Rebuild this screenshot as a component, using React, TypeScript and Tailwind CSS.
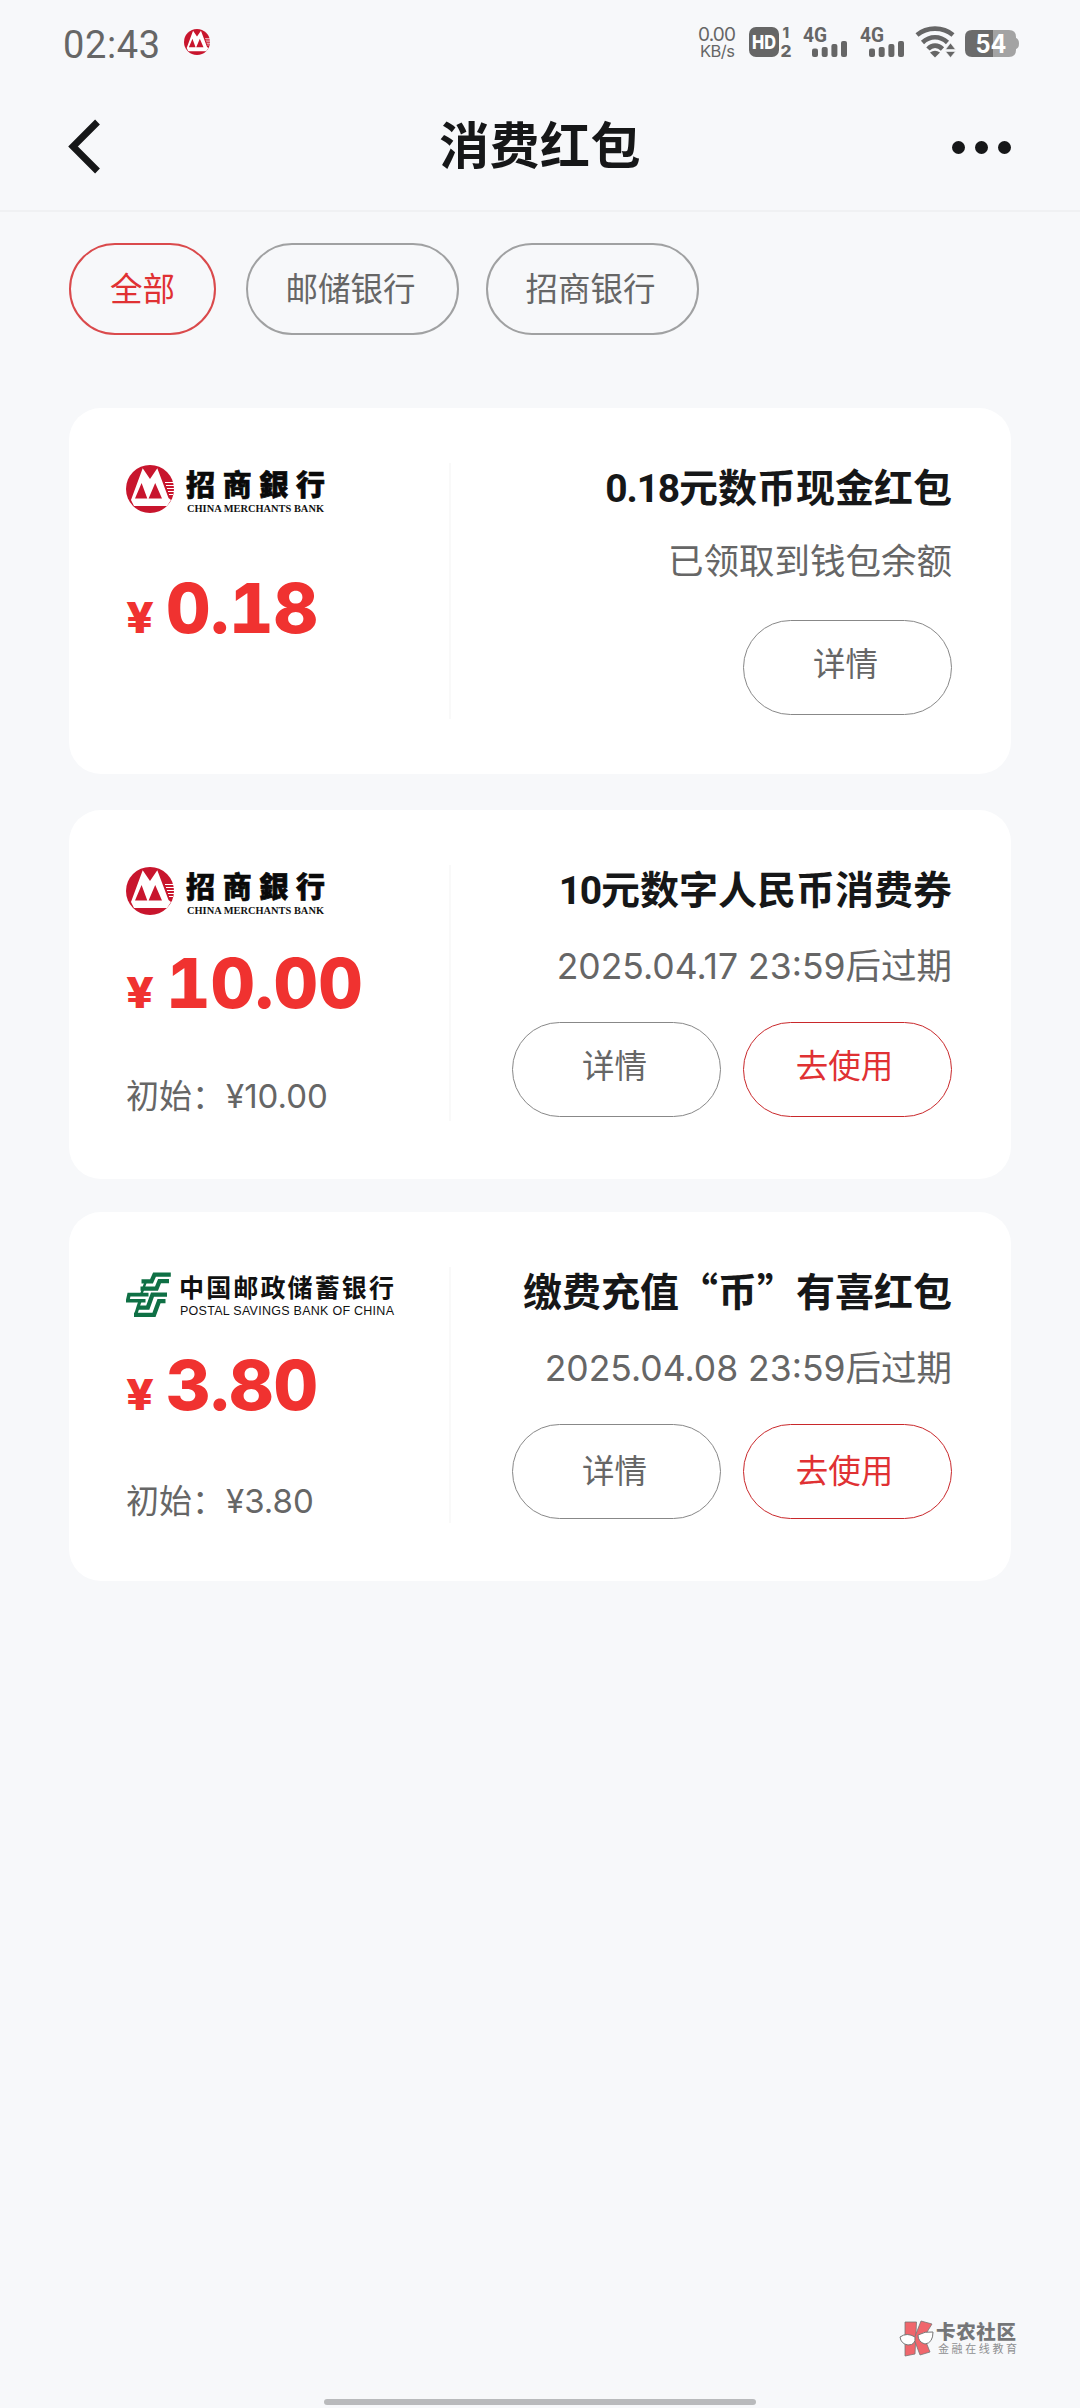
type Coupon = {
  bank: "cmb" | "psbc";
  amount: string;
  initial?: string;
  lead: string;
  title: string;
  note: string;
  card: string;
  amountGap: string;
  initialGap: string;
  noteGap: string;
  actionGap: string;
  labelShift: string;
};

const coupons: Coupon[] = [
  {
    bank: "cmb",
    amount: "0.18",
    lead: "0.18",
    title: "元数币现金红包",
    note: "已领取到钱包余额",
    card: "h-[366px] mb-9",
    amountGap: "mt-14",
    initialGap: "",
    noteGap: "mt-[19px]",
    actionGap: "mt-[33px]",
    labelShift: "pb-2.5",
  },
  {
    bank: "cmb",
    amount: "10.00",
    initial: "¥10.00",
    lead: "10",
    title: "元数字人民币消费券",
    note: "2025.04.17 23:59后过期",
    card: "h-[369px] mb-[33px]",
    amountGap: "mt-[29px]",
    initialGap: "mt-[55px]",
    noteGap: "mt-[22px]",
    actionGap: "mt-[30px]",
    labelShift: "pb-2.5",
  },
  {
    bank: "psbc",
    amount: "3.80",
    initial: "¥3.80",
    lead: "",
    title: "缴费充值“币”有喜红包",
    note: "2025.04.08 23:59后过期",
    card: "h-[369px]",
    amountGap: "mt-[29px]",
    initialGap: "mt-[58px]",
    noteGap: "mt-[22px]",
    actionGap: "mt-[30px]",
    labelShift: "pb-1",
  },
];

const CmbMark = ({ className }: { className: string }) => (
  <svg viewBox="0 0 48 48" className={className}>
    <circle cx="24" cy="24" r="24" fill="#c8152d" />
    <path d="M16.7 3.3 L24 14 L31.3 3.3 L42.5 33 L45 35 L41 41 H8 L5 35 Z" fill="#fff" />
    <path d="M15.6 18 L21.3 33.5 H9 Z M29.2 18 L36 33.5 H22.6 Z" fill="#c8152d" />
    <path d="M39 17.5H48M40 20.5H48M41 23.5H48M42 26.5H48M43 29.5H47" stroke="#fff" strokeWidth="1.2" />
  </svg>
);

const CmbLogo = () => (
  <svg width="200" height="52" viewBox="0 0 200 52" className="overflow-visible">
    <svg width="48" height="48">
      <CmbMark className="w-12 h-12" />
    </svg>
    <text x="60" y="31" textLength="139" fontSize="29" fontWeight="900" fill="#0a0a0a" stroke="#0a0a0a" strokeWidth="0.6" className="font-['Noto_Sans_CJK_TC',sans-serif]">
      招商銀行
    </text>
    <text x="61" y="47" textLength="137" lengthAdjust="spacingAndGlyphs" fontSize="10" fontWeight="700" fill="#111" className="font-['Liberation_Serif',serif]">
      CHINA MERCHANTS BANK
    </text>
  </svg>
);

const PsbcLogo = () => (
  <svg width="270" height="52" viewBox="0 0 270 52">
    <g fill="none" stroke="#0f7045" strokeWidth="4.3">
      <path d="M44.8 5.6 H28.5 L25.5 12.4 H15.5" />
      <path d="M43 12.2 H33.5 L30.5 19.6 H14.5" />
      <path d="M20 12 L15 26" strokeWidth="2.4" />
      <path d="M22.5 25.6 H3 L1.6 31.8 H19.5" strokeWidth="3.6" />
      <path d="M41 25.6 H26.5 L21.8 38.6 H11.5" />
      <path d="M39.5 32.2 H33 L28 45.8 H8" />
      <path d="M14 32 L9.5 46" strokeWidth="3.2" />
    </g>
    <text x="53" y="28" textLength="215" fontSize="25" fontWeight="700" fill="#111" className="font-['Noto_Sans_CJK_SC',sans-serif]">
      中国邮政储蓄银行
    </text>
    <text x="54" y="46" textLength="214" fontSize="12.5" fill="#111" className="font-['Liberation_Sans',sans-serif]">
      POSTAL SAVINGS BANK OF CHINA
    </text>
  </svg>
);

const Signal = () => (
  <svg width="45" height="32" viewBox="0 0 45 32" fill="#666">
    <text x="0" y="16" fontSize="20" fontWeight="700" textLength="24" lengthAdjust="spacingAndGlyphs" className="font-['Roboto',sans-serif]">
      4G
    </text>
    <rect x="9" y="22.5" width="6" height="8.5" rx="2" />
    <rect x="18.7" y="21" width="6" height="10" rx="2" />
    <rect x="28.4" y="18" width="6" height="13" rx="2" />
    <rect x="38" y="15" width="6" height="16" rx="2" />
  </svg>
);

const StatusBar = () => (
  <div className="flex h-[84px] items-start justify-between pl-[63px] pr-[60px] pt-[22px] text-[#666]">
    <div className="flex items-start pt-[5px]">
      <span className="w-[121px] font-['Roboto',sans-serif] text-[38px] leading-[36px] tracking-[0.6px]">02:43</span>
      <CmbMark className="mt-0.5 h-[26px] w-[26px]" />
    </div>
    <svg width="324" height="40" viewBox="697 22 324 40" fill="#666">
      <g className="font-['Inter',sans-serif]">
        <text x="699" y="41" fontSize="19" textLength="38">0.00</text>
        <text x="701" y="56.5" fontSize="16.5" textLength="35">KB/s</text>
      </g>
      <rect x="750" y="27" width="30" height="30" rx="7" />
      <g className="font-['Inter',sans-serif]" fontWeight="800">
        <text x="753" y="49" fontSize="19" fill="#fff" textLength="24" lengthAdjust="spacingAndGlyphs">HD</text>
        <text x="783.5" y="38" fontSize="15">1</text>
        <text x="781.5" y="56.5" fontSize="15.5" textLength="11" lengthAdjust="spacingAndGlyphs">2</text>
      </g>
      <svg x="804" y="26" width="45" height="32"><Signal /></svg>
      <svg x="861" y="26" width="45" height="32"><Signal /></svg>
      <g fill="none" stroke="#666" strokeWidth="4.6">
        <path d="M918 35 C928 26.5 944 26.5 954 35" />
        <path d="M923.5 42.5 C931 35.5 941 35.5 948.5 42.5" />
        <path d="M929 49 C933 44.5 939 44.5 943.5 49" />
      </g>
      <path d="M931 52.5 Q936 49 941 52.5 L936 57.5Z" />
      <path d="M946.5 49.5 L951.5 43 L956.5 49.5Z M946.5 51.5 L951.5 57.5 L956.5 51.5Z" stroke="#f7f8fa" strokeWidth="0.6" />
      <path d="M973 30H994V57H973Q966 57 966 50V37Q966 30 973 30Z" fill="#6b6b6b" />
      <path d="M994 30H1010Q1017 30 1017 37V38Q1020 39 1020 43.5Q1020 48 1017 49V50Q1017 57 1010 57H994Z" fill="#a3a3a3" />
      <text x="976.5" y="53" fontSize="25" fontWeight="700" fill="#fff" textLength="31" lengthAdjust="spacingAndGlyphs" className="font-['Inter',sans-serif]">54</text>
    </svg>
  </div>
);

const NavBar = () => (
  <div className="flex h-32 items-center justify-between border-b-2 border-[#f0f1f3] pl-[67px] pr-[69px]">
    <svg width="80" height="56" viewBox="0 0 80 56" fill="none">
      <path d="M30.5 3 L6 27.5 L30.5 52" stroke="#161718" strokeWidth="6.8" />
    </svg>
    <h1 className="pb-2.5 font-['Noto_Sans_CJK_SC',sans-serif] text-[50px] font-bold leading-[60px] text-[#161718] tracking-[0.4px]">
      消费红包
    </h1>
    <div className="flex w-[78px] justify-end gap-[10px]">
      <span className="h-[13px] w-[13px] rounded-full bg-[#161718]" />
      <span className="h-[13px] w-[13px] rounded-full bg-[#161718]" />
      <span className="h-[13px] w-[13px] rounded-full bg-[#161718]" />
    </div>
  </div>
);

const Filters = () => (
  <div className="flex px-[69px] pt-[31px] font-['Noto_Sans_CJK_SC',sans-serif] text-[32.5px] leading-none text-[#666]">
    <button className="h-[92px] w-[147px] rounded-full border-2 border-[#da4a4c] pb-[3px] text-[#e03133]">全部</button>
    <button className="ml-[30px] h-[92px] w-[213px] rounded-full border-2 border-[#a0a1a2] pb-[3px] pr-1">邮储银行</button>
    <button className="ml-[27px] h-[92px] w-[213px] rounded-full border-2 border-[#a0a1a2] pb-[3px] pr-1">招商银行</button>
  </div>
);

const CouponCard = ({ coupon }: { coupon: Coupon }) => (
  <div className={`flex rounded-[32px] bg-white pl-[57px] pr-[59px] ${coupon.card}`}>
    <div className="w-[323px] pt-[57px]">
      <div className="h-[52px]">{coupon.bank === "cmb" ? <CmbLogo /> : <PsbcLogo />}</div>
      <div className={`flex h-[70px] items-baseline font-['Inter',sans-serif] font-extrabold text-[#f03230] ${coupon.amountGap}`}>
        <span className="inline-block w-[35px] origin-left scale-x-115 text-[42px] leading-[70px]">¥</span>
        <span className="ml-[5px] text-[69px] leading-[70px] tabular-nums">{coupon.amount}</span>
      </div>
      {coupon.initial && (
        <p className={`whitespace-nowrap font-['Inter','Noto_Sans_CJK_SC',sans-serif] text-[33px] leading-[46px] text-[#666] ${coupon.initialGap}`}>
          初始：<span className="ml-px">{coupon.initial}</span>
        </p>
      )}
    </div>
    <div className="mt-[55px] h-[256px] w-0.5 bg-[#f9f9f9]" />
    <div className="flex flex-1 flex-col items-end whitespace-nowrap pt-12">
      <h2 className="h-[62px] font-['Noto_Sans_CJK_SC',sans-serif] text-[39px] font-bold leading-[59px] text-[#161718]">
        <span className="font-['Roboto',sans-serif] tracking-[-1.2px]">{coupon.lead}</span>
        {coupon.title}
      </h2>
      <p className={`font-['Inter','Noto_Sans_CJK_SC',sans-serif] text-[35.5px] leading-[50px] text-[#666] ${coupon.noteGap}`}>
        {coupon.note}
      </p>
      <div className={`flex gap-[22px] font-['Noto_Sans_CJK_SC',sans-serif] text-[32.5px] leading-none ${coupon.actionGap}`}>
        <button className={`h-[95px] w-[209px] rounded-full border border-[#888] pr-1 text-[#666] ${coupon.labelShift}`}>详情</button>
        {coupon.initial && (
          <button className={`h-[95px] w-[209px] rounded-full border border-[#c9282b] pr-1.5 text-[#e03133] ${coupon.labelShift}`}>去使用</button>
        )}
      </div>
    </div>
  </div>
);

const Watermark = () => (
  <svg width="120" height="50" viewBox="900 2312 120 50">
    <g fill="#f0666c" stroke="#777" strokeWidth="0.8">
      <path d="M906 2322H917.5L916 2354L906 2356Z" />
      <path d="M922 2321L933 2324L925 2337L931 2352L921 2355L915 2339Z" />
    </g>
    <g fill="#fff" stroke="#777" strokeWidth="1">
      <path d="M901 2337Q908 2332 916 2337Q917 2345 909 2345Q902 2344 901 2337Z" />
      <path d="M919 2335Q926 2331 934 2332Q934 2343 926 2344Q919 2342 919 2335Z" />
    </g>
    <g className="font-['Noto_Sans_CJK_SC',sans-serif]">
      <text x="937" y="2339" fontSize="19.5" fontWeight="900" fill="#757678" textLength="80">卡农社区</text>
      <text x="939" y="2353" fontSize="11" fill="#8e8f91" textLength="79">金融在线教育</text>
    </g>
  </svg>
);

export default function App() {
  return (
    <div className="flex h-[2408px] w-[1080px] flex-col overflow-hidden bg-[#f7f8fa]">
      <StatusBar />
      <NavBar />
      <Filters />
      <main className="mt-[73px] flex flex-col px-[69px]">
        {coupons.map((coupon) => (
          <CouponCard key={coupon.title} coupon={coupon} />
        ))}
      </main>
      <footer className="mt-auto flex flex-col items-center">
        <div className="self-end pr-[61px]">
          <Watermark />
        </div>
        <div className="mb-[3px] mt-[37px] h-1.5 w-[432px] rounded-full bg-[#b9babc]" />
      </footer>
    </div>
  );
}
